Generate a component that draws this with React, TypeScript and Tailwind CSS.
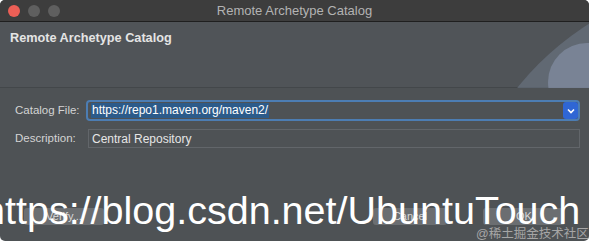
import React from "react";

function TrafficLights() {
  return (
    <div className="flex items-center gap-[8px] pl-[8px]">
      <div className="w-[12px] h-[12px] rounded-full bg-[#ec5f56]"></div>
      <div className="w-[12px] h-[12px] rounded-full bg-[#5f5f5f]"></div>
      <div className="w-[12px] h-[12px] rounded-full bg-[#5f5f5f]"></div>
    </div>
  );
}

function Arcs() {
  return (
    <svg
      className="absolute right-0 top-0"
      width="80"
      height="66"
      viewBox="0 0 80 66"
    >
      <circle cx="232" cy="244" r="286" fill="#6f7a8a" fillOpacity="0.55" />
      <circle cx="78" cy="60" r="39" fill="#8894ab" fillOpacity="0.6" />
    </svg>
  );
}

function App() {
  return (
    <div className="w-[593px] h-[244px] bg-white font-['Liberation_Sans',_'Noto_Sans_CJK_SC',_sans-serif]">
      <div className="relative w-[589px] h-[241px] rounded-[5px] overflow-hidden bg-[#4e5255] flex flex-col">
        <div className="h-[22px] flex items-center bg-[#3d3d3d] border-b border-[#1f1f1f] relative">
          <TrafficLights />
          <p className="absolute left-0 right-0 text-center text-[13px] text-[#b3b3b3]">
            Remote Archetype Catalog
          </p>
        </div>
        <div className="relative h-[66px] bg-[#505458] border-b border-[#43474a] px-[10px] pt-[7px]">
          <p className="font-[700] text-[12.7px] text-[#e4e4e4]">
            Remote Archetype Catalog
          </p>
          <Arcs />
        </div>
        <div className="flex flex-col pl-[15px] pr-[9px] pt-[12px] gap-[8px]">
          <div className="flex items-center">
            <p className="w-[71px] text-[11.5px] text-[#d4d4d4]">Catalog File:</p>
            <div className="flex-1 h-[21px] rounded-[4px] border-[2px] border-[#4c7db3] flex items-center bg-[#4e5255]">
              <span className="ml-[3px] px-[1px] text-[12px] leading-[15px] text-white bg-[#2c5b8a]">
                https://repo1.maven.org/maven2/
              </span>
              <div className="ml-auto w-[15px] h-[17px] rounded-[3px] bg-[#2f66d4] flex items-center justify-center">
                <svg width="8" height="6" viewBox="0 0 8 6">
                  <path d="M1 1.5 L4 4.5 L7 1.5" stroke="white" strokeWidth="1.6" fill="none" />
                </svg>
              </div>
            </div>
          </div>
          <div className="flex items-center">
            <p className="w-[73px] text-[11.5px] text-[#d4d4d4]">Description:</p>
            <div className="flex-1 h-[19px] border border-[#62666a] flex items-center">
              <span className="ml-[3px] text-[12px] text-[#e6e6e6]">Central Repository</span>
            </div>
          </div>
        </div>
        <div className="mt-auto mb-[16px] flex items-center px-[24px]">
          <div className="w-[80px] h-[17px] rounded-[3px] bg-[#6b6e71] flex items-center justify-center text-[11px] text-[#d8d8d8]">
            Verify...
          </div>
          <div className="ml-auto w-[74px] h-[17px] rounded-[3px] bg-[#6b6e71] flex items-center justify-center text-[11px] text-[#d8d8d8]">
            Cancel
          </div>
          <div className="ml-[36px] w-[82px] h-[17px] rounded-[3px] bg-[#6b6e71] flex items-center justify-center text-[11px] text-[#d8d8d8]">
            OK
          </div>
        </div>
      </div>
      <p className="absolute left-[-17px] top-[187px] text-[39.5px] leading-[46px] text-white whitespace-nowrap">
        https://blog.csdn.net/UbuntuTouch
      </p>
      <p className="absolute left-[476px] top-[227px] text-[12.5px] leading-[14px] text-[#a6a6a6] whitespace-nowrap">
        @稀土掘金技术社区
      </p>
    </div>
  );
}

export default App;
